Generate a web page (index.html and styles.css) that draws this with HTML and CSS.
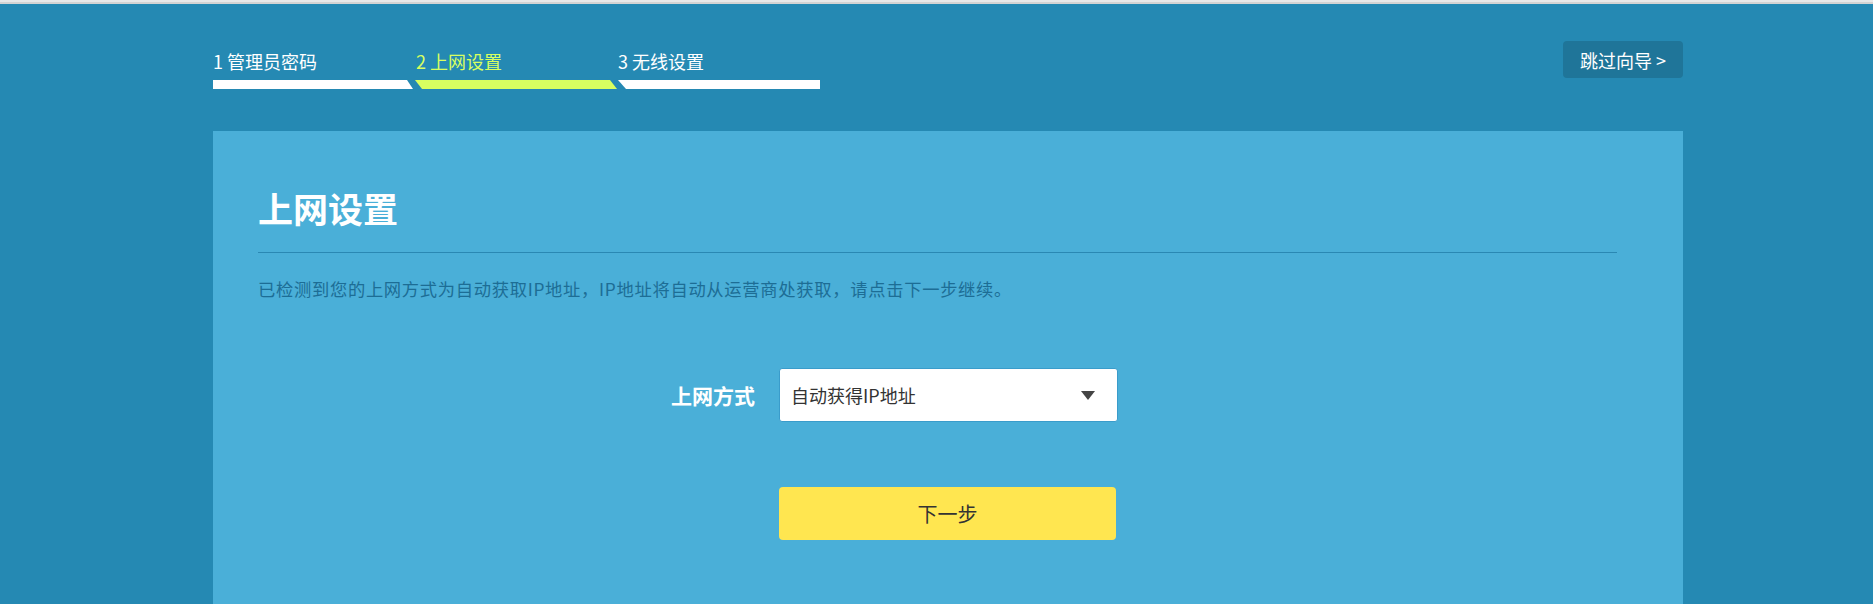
FILE: index.html
```html
<!DOCTYPE html>
<html lang="zh-CN">
<head>
<meta charset="utf-8">
<title>上网设置</title>
<link rel="stylesheet" href="styles.css">
</head>
<body>
<div class="topline"></div>
<div class="page">
  <header class="header">
    <div class="steps">
      <div class="step step-1">
        <div class="step-label">1 管理员密码</div>
        <div class="step-bar"></div>
      </div>
      <div class="step step-2 active">
        <div class="step-label">2 上网设置</div>
        <div class="step-bar"></div>
      </div>
      <div class="step step-3">
        <div class="step-label">3 无线设置</div>
        <div class="step-bar"></div>
      </div>
    </div>
    <button class="skip" type="button">跳过向导 &gt;</button>
  </header>
  <main class="card">
    <h1 class="title">上网设置</h1>
    <p class="desc">已检测到您的上网方式为自动获取IP地址，IP地址将自动从运营商处获取，请点击下一步继续。</p>
    <div class="form">
      <div class="form-label">上网方式</div>
      <div class="select">
        <span class="select-text">自动获得IP地址</span>
        <svg class="select-arrow" width="14" height="9" viewBox="0 0 14 9"><path d="M0 0H14L7 9Z" fill="#444"/></svg>
      </div>
      <div></div>
      <button class="next" type="button">下一步</button>
    </div>
  </main>
</div>
</body>
</html>
```
FILE: styles.css
```css
html, body {
  margin: 0;
  padding: 0;
}
body {
  background: #2589b3;
  font-family: "Noto Sans CJK SC", "Noto Sans", sans-serif;
}
.topline {
  height: 2px;
  background: #e8e8e8;
  border-bottom: 2px solid #d3d3d3;
}
.page {
  width: 1470px;
  margin-left: 213px;
}
.header {
  display: flex;
  justify-content: space-between;
  align-items: flex-start;
  padding-top: 37px;
  height: 90px;
}
.steps {
  display: flex;
  padding-top: 8px;
}
.step {
  width: 202px;
}
.step-3 {
  width: 203px;
}
.step-label {
  font-size: 18px;
  line-height: 24px;
  color: #ffffff;
  height: 24px;
  white-space: nowrap;
}
.step-2 .step-label,
.step-3 .step-label {
  padding-left: 1px;
}
.step-bar {
  margin-top: 7px;
  height: 9px;
  background: #ffffff;
}
.step-1 .step-bar {
  clip-path: polygon(0 0, 194px 0, 200px 9px, 0 9px);
}
.step-2 .step-bar {
  clip-path: polygon(0 0, 195px 0, 202px 9px, 7px 9px);
}
.step-3 .step-bar {
  clip-path: polygon(1px 0, 203px 0, 203px 9px, 9px 9px);
}
.active .step-label {
  color: #d8ff60;
}
.active .step-bar {
  background: #d8ff60;
}
.skip {
  width: 120px;
  height: 37px;
  border: 0;
  border-radius: 4px;
  background: #1f7599;
  color: #ffffff;
  font-family: inherit;
  font-size: 18px;
  line-height: 24px;
  padding: 0;
  cursor: pointer;
}
.card {
  background: #4aafd8;
  padding: 55px 66px 64px 45px;
}
.title {
  margin: 0;
  font-size: 35px;
  line-height: 44px;
  font-weight: 700;
  color: #ffffff;
  padding-bottom: 22px;
  border-bottom: 1px solid #2a88b3;
}
.desc {
  margin: 24px 0 0 0;
  font-size: 17.3px;
  letter-spacing: 0.7px;
  line-height: 24px;
  color: #1d6d95;
}
.form {
  display: grid;
  grid-template-columns: 497px 339px;
  column-gap: 24px;
  row-gap: 65px;
  margin-top: 67px;
}
.form-label {
  text-align: right;
  font-size: 21px;
  font-weight: 700;
  color: #ffffff;
  align-self: center;
  line-height: 28px;
}
.select {
  box-sizing: border-box;
  height: 54px;
  background: #ffffff;
  border: 1px solid #3a9ccb;
  border-radius: 3px;
  display: flex;
  align-items: center;
  justify-content: space-between;
  padding: 0 22px 0 11px;
}
.select-text {
  font-size: 18px;
  color: #333333;
  line-height: 24px;
}
.select-arrow {
  display: block;
  margin-top: 1px;
}
.next {
  width: 337px;
  height: 53px;
  border: 0;
  border-radius: 4px;
  background: #ffe650;
  color: #333333;
  font-family: inherit;
  font-size: 20px;
  padding: 0;
  cursor: pointer;
}
```
